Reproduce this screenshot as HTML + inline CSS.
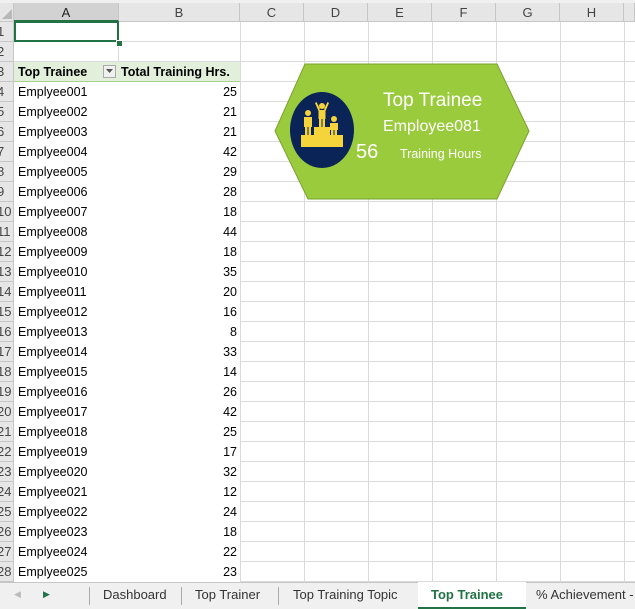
<!DOCTYPE html>
<html><head><style>
body{margin:0;width:635px;height:609px;overflow:hidden;background:#fff;font-family:"Liberation Sans",Arial,sans-serif;font-size:12.5px;position:relative}
.a{position:absolute}
.ch{position:absolute;top:3px;height:19px;background:#e6e6e6;border-right:1px solid #c6c6c6;border-bottom:1px solid #c6c6c6;text-align:center;line-height:19px;color:#444;font-size:13px;box-sizing:border-box}
.rh{position:absolute;left:0;width:14px;height:20px;background:#e6e6e6;border-bottom:1px solid #c6c6c6;border-right:1px solid #c6c6c6;box-sizing:border-box;font-size:13px;line-height:20px;color:#444;overflow:hidden;text-indent:-3px}
.vl{position:absolute;top:22px;height:560px;width:1px;background:#dadada}
.hl{position:absolute;left:14px;width:621px;height:1px;background:#dadada}
.c{position:absolute;height:20px;line-height:21px;white-space:nowrap}
.tab{position:absolute;top:582px;height:27px;line-height:25px;font-size:13px;color:#333}
</style></head><body>
<div class="a" style="left:0;top:0;width:635px;height:3px;background:#f0f0f0"></div>
<div class="ch" style="left:0;width:14px"></div>
<svg class="a" style="left:2px;top:8px" width="11" height="12"><polygon points="10,1 10,11 0,11" fill="#b8b8b8"/></svg>
<div class="ch" style="left:14px;width:105px;background:#d2d2d2;border-bottom:2px solid #217346;color:#222">A</div>
<div class="ch" style="left:119px;width:121px">B</div>
<div class="ch" style="left:240px;width:64px">C</div>
<div class="ch" style="left:304px;width:64px">D</div>
<div class="ch" style="left:368px;width:64px">E</div>
<div class="ch" style="left:432px;width:64px">F</div>
<div class="ch" style="left:496px;width:64px">G</div>
<div class="ch" style="left:560px;width:64px">H</div>
<div class="ch" style="left:624px;width:11px"></div>
<div class="vl" style="left:240px"></div><div class="vl" style="left:304px"></div><div class="vl" style="left:368px"></div><div class="vl" style="left:432px"></div><div class="vl" style="left:496px"></div><div class="vl" style="left:560px"></div><div class="vl" style="left:624px"></div>
<div class="vl" style="left:118px;height:40px"></div>
<div class="hl" style="top:41px"></div><div class="hl" style="top:61px"></div>
<div id="rows"></div>
<div class="a" style="left:14px;top:62px;width:226px;height:20px;background:#e2efda;border-bottom:1px solid #a9d08e;box-sizing:border-box"></div>
<div class="c" style="left:18px;top:62px;font-weight:bold">Top Trainee</div>
<div class="a" style="left:103px;top:65px;width:13px;height:13px;border:1px solid #aaa;background:#f0f0f0;box-sizing:border-box"></div>
<svg class="a" style="left:106px;top:69px" width="8" height="5"><polygon points="0,0 7,0 3.5,4" fill="#555"/></svg>
<div class="c" style="left:121px;top:62px;font-weight:bold">Total Training Hrs.</div>
<div class="a" style="left:14px;top:21px;width:105px;height:21px;border:2px solid #217346;box-sizing:border-box"></div>
<div class="a" style="left:116px;top:40px;width:5px;height:5px;background:#217346;border:1px solid #fff"></div>
<script>
var v=[25,21,21,42,29,28,18,44,18,35,20,16,8,33,14,26,42,25,17,32,12,24,18,22,23];
var h='';
for(var r=1;r<=28;r++){var t=22+(r-1)*20;h+='<div class="rh" style="top:'+t+'px">'+r+'</div>';if(r>2)h+='<div class="hl" style="top:'+(t+19)+'px;'+(r>2?'':'')+'"></div>';}
for(var i=0;i<25;i++){var t=82+i*20;var n=('00'+(i+1)).slice(-3);h+='<div class="c" style="left:18px;top:'+t+'px">Emplyee'+n+'</div><div class="c" style="left:119px;width:118px;text-align:right;top:'+t+'px">'+v[i]+'</div><div class="a" style="left:14px;top:'+(t+19)+'px;width:226px;height:1px;background:#fff"></div>';}
document.getElementById('rows').innerHTML=h;
</script>
<svg class="a" style="left:0;top:0" width="635" height="582">
<polygon points="305,64 497,64 529,131 497,199 308,199 275,131" fill="#9acb3c" stroke="#7aa030" stroke-width="1"/>
<ellipse cx="322" cy="130" rx="32" ry="38" fill="#0a2458"/>
<g fill="#f5d33a">
<rect x="301" y="135" width="42" height="12"/>
<rect x="314" y="127" width="16" height="9"/>
<circle cx="308" cy="113" r="3"/><rect x="304" y="117" width="8" height="10"/><rect x="305" y="126" width="2.5" height="9"/><rect x="308.5" y="126" width="2.5" height="9"/>
<circle cx="322" cy="106" r="3"/><rect x="318.5" y="110" width="7" height="9"/><rect x="319" y="118" width="2.5" height="9"/><rect x="322.5" y="118" width="2.5" height="9"/>
<polygon points="318.5,111 315,103 316.5,102 320,109"/><polygon points="325.5,111 329,103 327.5,102 324,109"/>
<circle cx="334" cy="119" r="3"/><rect x="330" y="123" width="8" height="7"/><rect x="331" y="129" width="2.5" height="6"/><rect x="334.5" y="129" width="2.5" height="6"/>
</g>
<text x="383" y="106" fill="#fff" font-family="Liberation Sans" font-size="19">Top Trainee</text>
<text x="383" y="131" fill="#fff" font-family="Liberation Sans" font-size="16">Employee081</text>
<text x="356" y="158" fill="#fff" font-family="Liberation Sans" font-size="20">56</text>
<text x="400" y="158" fill="#fff" font-family="Liberation Sans" font-size="12.5">Training Hours</text>
</svg>
<div class="a" style="left:0;top:582px;width:635px;height:27px;background:#f0f0f0;border-top:1px solid #c6c6c6;box-sizing:border-box"></div>
<div class="a" style="left:14px;top:589px;color:#bbb;font-size:9px">◀</div>
<div class="a" style="left:43px;top:589px;color:#217346;font-size:9px">▶</div>
<div class="a" style="left:89px;top:587px;width:1px;height:18px;background:#aaa"></div>
<div class="tab" style="left:103px">Dashboard</div>
<div class="a" style="left:181px;top:587px;width:1px;height:18px;background:#aaa"></div>
<div class="tab" style="left:195px">Top Trainer</div>
<div class="a" style="left:278px;top:587px;width:1px;height:18px;background:#aaa"></div>
<div class="tab" style="left:293px">Top Training Topic</div>
<div class="a" style="left:418px;top:582px;width:108px;height:27px;background:#fff;border-bottom:2px solid #217346;box-sizing:border-box"></div>
<div class="tab" style="left:431px;font-weight:bold;color:#217346">Top Trainee</div>
<div class="tab" style="left:536px">% Achievement -</div>
</body></html>
